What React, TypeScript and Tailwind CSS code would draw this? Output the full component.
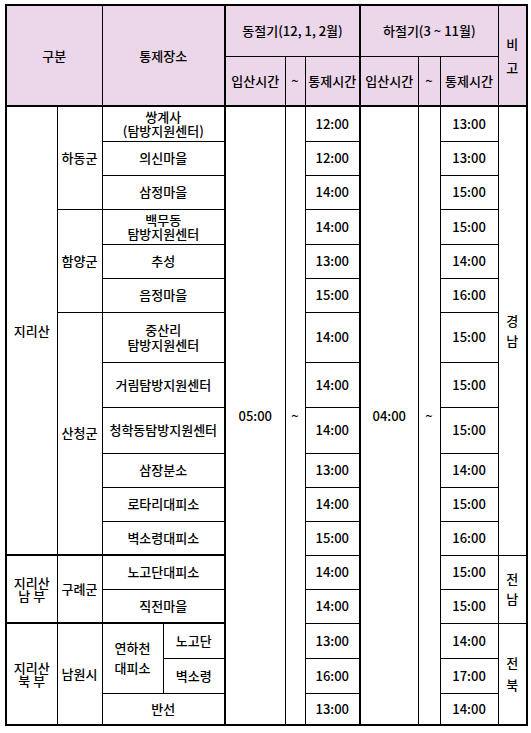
import React from 'react';

const cell = 'border border-black p-0 text-center align-middle whitespace-nowrap';
const head = `${cell} bg-[#ecd6ea] font-medium`;

function TimeCells({ winter, summer }: { winter: string; summer: string }) {
  return (
    <>
      <td className={cell}>{winter}</td>
      <td className={cell}>{summer}</td>
    </>
  );
}

export default function App() {
  return (
    <div className="bg-white w-[531px] h-[733px] pt-[4px] pl-[5px]">
      <table
        className="border-collapse border-2 border-black table-fixed w-[521px] text-[13px] leading-[14px] font-medium text-black"
        style={{ fontFamily: '"Noto Sans CJK KR", "Noto Sans", sans-serif' }}
      >
        <colgroup>
          <col className="w-[51px]" />
          <col className="w-[45px]" />
          <col className="w-[61px]" />
          <col className="w-[62px]" />
          <col className="w-[60px]" />
          <col className="w-[20px]" />
          <col className="w-[55px]" />
          <col className="w-[58px]" />
          <col className="w-[22px]" />
          <col className="w-[58px]" />
          <col className="w-[29px]" />
        </colgroup>
        <thead>
          <tr className="h-[51px]">
            <th rowSpan={2} colSpan={2} className={`${head} border-b-2`}>구분</th>
            <th rowSpan={2} colSpan={2} className={`${head} border-b-2`}>통제장소</th>
            <th colSpan={3} className={`${head} border-l-2`}>동절기(12, 1, 2월)</th>
            <th colSpan={3} className={`${head} border-l-2`}>하절기(3 ~ 11월)</th>
            <th rowSpan={2} className={`${head} border-b-2 leading-[24px]`}>
              비<br />고
            </th>
          </tr>
          <tr className="h-[50px]">
            <th className={`${head} border-l-2 border-b-2`}>입산시간</th>
            <th className={`${head} border-b-2`}>~</th>
            <th className={`${head} border-b-2`}>통제시간</th>
            <th className={`${head} border-l-2 border-b-2`}>입산시간</th>
            <th className={`${head} border-b-2`}>~</th>
            <th className={`${head} border-b-2`}>통제시간</th>
          </tr>
        </thead>
        <tbody>
          {/* 지리산 - 하동군 */}
          <tr className="h-[35px]">
            <td rowSpan={12} className={`${cell} border-t-2 border-b-2`}>지리산</td>
            <td rowSpan={3} className={`${cell} border-t-2`}>하동군</td>
            <td colSpan={2} className={`${cell} border-t-2 border-r-2 leading-[14px]`}>
              쌍계사<br />(탐방지원센터)
            </td>
            <td rowSpan={17} className={`${cell} border-t-2 border-l-2`}>05:00</td>
            <td rowSpan={17} className={`${cell} border-t-2`}>~</td>
            <td className={`${cell} border-t-2`}>12:00</td>
            <td rowSpan={17} className={`${cell} border-t-2 border-l-2`}>04:00</td>
            <td rowSpan={17} className={`${cell} border-t-2`}>~</td>
            <td className={`${cell} border-t-2`}>13:00</td>
            <td rowSpan={12} className={`${cell} border-t-2 leading-[20px]`}>
              경<br />남
            </td>
          </tr>
          <tr className="h-[34px]">
            <td colSpan={2} className={`${cell} border-r-2`}>의신마을</td>
            <TimeCells winter="12:00" summer="13:00" />
          </tr>
          <tr className="h-[34px]">
            <td colSpan={2} className={`${cell} border-r-2`}>삼정마을</td>
            <TimeCells winter="14:00" summer="15:00" />
          </tr>

          {/* 함양군 */}
          <tr className="h-[35px]">
            <td rowSpan={3} className={cell}>함양군</td>
            <td colSpan={2} className={`${cell} border-r-2`}>
              백무동<br />탐방지원센터
            </td>
            <TimeCells winter="14:00" summer="15:00" />
          </tr>
          <tr className="h-[34px]">
            <td colSpan={2} className={`${cell} border-r-2`}>추성</td>
            <TimeCells winter="13:00" summer="14:00" />
          </tr>
          <tr className="h-[34px]">
            <td colSpan={2} className={`${cell} border-r-2`}>음정마을</td>
            <TimeCells winter="15:00" summer="16:00" />
          </tr>

          {/* 산청군 */}
          <tr className="h-[50px]">
            <td rowSpan={6} className={`${cell} border-b-2`}>산청군</td>
            <td colSpan={2} className={`${cell} border-r-2 leading-[15px]`}>
              중산리<br />탐방지원센터
            </td>
            <TimeCells winter="14:00" summer="15:00" />
          </tr>
          <tr className="h-[45px]">
            <td colSpan={2} className={`${cell} border-r-2`}>거림탐방지원센터</td>
            <TimeCells winter="14:00" summer="15:00" />
          </tr>
          <tr className="h-[46px]">
            <td colSpan={2} className={`${cell} border-r-2`}>청학동탐방지원센터</td>
            <TimeCells winter="14:00" summer="15:00" />
          </tr>
          <tr className="h-[34px]">
            <td colSpan={2} className={`${cell} border-r-2`}>삼장분소</td>
            <TimeCells winter="13:00" summer="14:00" />
          </tr>
          <tr className="h-[34px]">
            <td colSpan={2} className={`${cell} border-r-2`}>로타리대피소</td>
            <TimeCells winter="14:00" summer="15:00" />
          </tr>
          <tr className="h-[34px]">
            <td colSpan={2} className={`${cell} border-r-2 border-b-2`}>벽소령대피소</td>
            <TimeCells winter="15:00" summer="16:00" />
          </tr>

          {/* 지리산 남부 - 구례군 */}
          <tr className="h-[34px]">
            <td rowSpan={2} className={`${cell} leading-[13px] border-b-2`}>
              지리산<br />남 부
            </td>
            <td rowSpan={2} className={`${cell} border-b-2`}>구례군</td>
            <td colSpan={2} className={`${cell} border-r-2`}>노고단대피소</td>
            <TimeCells winter="14:00" summer="15:00" />
            <td rowSpan={2} className={`${cell} leading-[20px]`}>
              전<br />남
            </td>
          </tr>
          <tr className="h-[34px]">
            <td colSpan={2} className={`${cell} border-r-2 border-b-2`}>직전마을</td>
            <TimeCells winter="14:00" summer="15:00" />
          </tr>

          {/* 지리산 북부 - 남원시 */}
          <tr className="h-[35px]">
            <td rowSpan={3} className={`${cell} leading-[13px]`}>
              지리산<br />북 부
            </td>
            <td rowSpan={3} className={cell}>남원시</td>
            <td rowSpan={2} className={`${cell} leading-[20px]`}>
              연하천<br />대피소
            </td>
            <td className={`${cell} border-r-2`}>노고단</td>
            <TimeCells winter="13:00" summer="14:00" />
            <td rowSpan={3} className={`${cell} leading-[22px]`}>
              전<br />북
            </td>
          </tr>
          <tr className="h-[35px]">
            <td className={`${cell} border-r-2`}>벽소령</td>
            <TimeCells winter="16:00" summer="17:00" />
          </tr>
          <tr className="h-[32px]">
            <td colSpan={2} className={`${cell} border-r-2`}>반선</td>
            <TimeCells winter="13:00" summer="14:00" />
          </tr>
        </tbody>
      </table>
    </div>
  );
}
